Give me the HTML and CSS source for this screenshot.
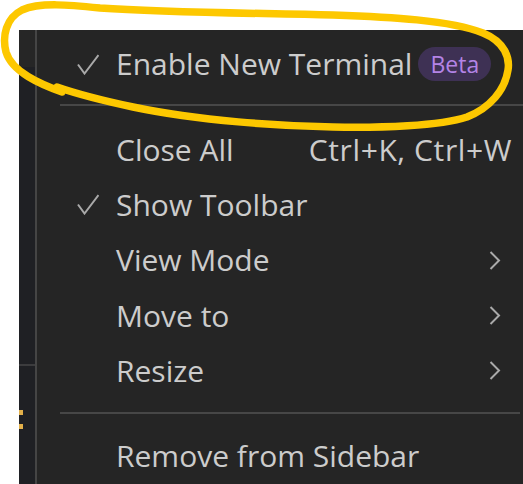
FILE: index.html
```html
<!DOCTYPE html>
<html>
<head>
<meta charset="utf-8">
<link rel="stylesheet" href="styles.css">
</head>
<body>
<div class="app">
  <div class="strip">
    <div class="strip-top"></div>
    <div class="strip-body">
      <div class="strip-rule"></div>
      <div class="dots"><span class="dot"></span><span class="dot"></span></div>
    </div>
  </div>
  <div class="vline"></div>
  <div class="menu">
    <div class="item">
      <span class="check"><svg width="22" height="21" viewBox="0 0 22 21"><polyline points="1,10.5 7.5,19.5 21.5,1" fill="none" stroke="#a9a9a9" stroke-width="2"/></svg></span>
      <span class="label">Enable New Terminal</span>
      <span class="badge">Beta</span>
    </div>
    <div class="sep"></div>
    <div class="item">
      <span class="check"></span>
      <span class="label grow">Close All</span>
      <span class="shortcut">Ctrl+K, Ctrl+W</span>
    </div>
    <div class="item">
      <span class="check"><svg width="22" height="21" viewBox="0 0 22 21"><polyline points="1,10.5 7.5,19.5 21.5,1" fill="none" stroke="#a9a9a9" stroke-width="2"/></svg></span>
      <span class="label grow">Show Toolbar</span>
    </div>
    <div class="item">
      <span class="check"></span>
      <span class="label grow">View Mode</span>
      <span class="chev"><svg width="12" height="19" viewBox="0 0 12 19"><polyline points="1.5,1 10,9.5 1.5,18" fill="none" stroke="#a9a9a9" stroke-width="2"/></svg></span>
    </div>
    <div class="item">
      <span class="check"></span>
      <span class="label grow">Move to</span>
      <span class="chev"><svg width="12" height="19" viewBox="0 0 12 19"><polyline points="1.5,1 10,9.5 1.5,18" fill="none" stroke="#a9a9a9" stroke-width="2"/></svg></span>
    </div>
    <div class="item">
      <span class="check"></span>
      <span class="label grow">Resize</span>
      <span class="chev"><svg width="12" height="19" viewBox="0 0 12 19"><polyline points="1.5,1 10,9.5 1.5,18" fill="none" stroke="#a9a9a9" stroke-width="2"/></svg></span>
    </div>
    <div class="sep sep2"></div>
    <div class="item">
      <span class="check"></span>
      <span class="label grow">Remove from Sidebar</span>
    </div>
  </div>
</div>
<svg class="annot" width="523" height="484" viewBox="0 0 523 484">
  <path d="M 62 92 C 40 84 12 72 6 52 C 2 36 6 18 22 10 C 40 2 70 5 100 8 C 170 13 260 13 333 15 C 390 17 450 20 483 33 C 505 42 510 58 508 70 C 505 90 490 108 467 117 C 440 126 380 128 333 127 C 280 126 200 121 133 107 C 100 100 80 95 57 87" fill="none" stroke="#fdc800" stroke-width="7.5" stroke-linecap="round" stroke-linejoin="round"/>
</svg>
</body>
</html>
```

FILE: styles.css
```css
html, body {
  margin: 0;
  padding: 0;
  background: #ffffff;
  width: 523px;
  height: 484px;
  overflow: hidden;
}

.app {
  margin: 30px 0 0 19px;
  height: 454px;
  display: flex;
  background: #252526;
  font-family: "Open Sans", "Noto Sans", sans-serif;
}

.strip {
  width: 16px;
  display: flex;
  flex-direction: column;
}

.strip-top {
  height: 37px;
  background: #262626;
}

.strip-body {
  flex: 1;
  background: #1f2024;
}

.strip-rule {
  margin-top: 297px;
  height: 2px;
  background: #3c3c3e;
}

.dots {
  margin-top: 44px;
  display: flex;
  flex-direction: column;
  gap: 9px;
}

.dot {
  width: 4px;
  height: 5px;
  background: #e2b04a;
}

.vline {
  width: 2px;
  background: #454545;
}

.menu {
  flex: 1;
  display: flex;
  flex-direction: column;
  padding-top: 6.5px;
  background: #252525;
}

.item {
  height: 55.5px;
  display: flex;
  align-items: center;
  padding-left: 40px;
  padding-right: 11px;
  color: #cccccc;
  font-size: 30px;
  white-space: nowrap;
}

.check {
  width: 22px;
  height: 21px;
  margin-right: 17px;
  flex: none;
  display: flex;
}

.label {
  line-height: 1;
}

.grow {
  flex: 1;
}

.badge {
  margin-left: 6px;
  height: 34px;
  padding: 0 12px;
  border-radius: 17px;
  background: #3e3154;
  color: #b484e6;
  font-size: 23px;
  display: flex;
  align-items: center;
}

.shortcut {
  line-height: 1;
  letter-spacing: 0.6px;
}

.chev {
  display: flex;
  margin-right: 11px;
}

.sep {
  height: 30px;
  flex: none;
  position: relative;
  margin-left: 23px;
}

.sep::after {
  content: "";
  position: absolute;
  left: 0;
  right: 0;
  top: 12px;
  height: 2px;
  background: #474747;
}

.sep2::after {
  right: 3px;
  top: 13px;
}

.annot {
  position: absolute;
  left: 0;
  top: 0;
  pointer-events: none;
}
```
